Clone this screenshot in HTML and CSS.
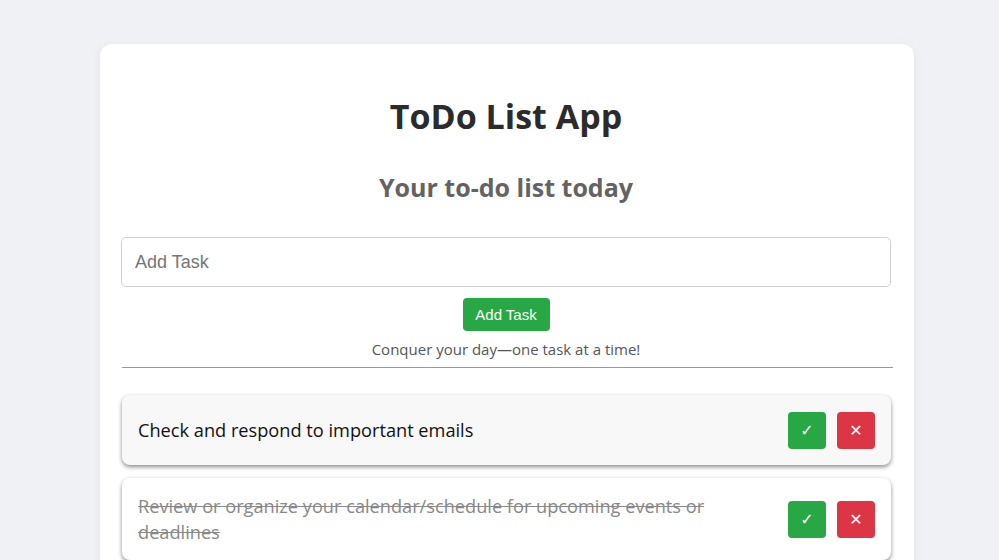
FILE: index.html
```html
<!DOCTYPE html>
<html>
<head>
<meta charset="utf-8">
<link rel="stylesheet" href="styles.css">
</head>
<body>
<main class="card">
  <h1 class="title">ToDo List App</h1>
  <h2 class="subtitle">Your to-do list today</h2>
  <form class="add-form" onsubmit="return false">
    <input class="task-input" type="text" placeholder="Add Task">
    <button class="add-btn" type="submit">Add Task</button>
  </form>
  <p class="tagline">Conquer your day—one task at a time!</p>
  <hr class="divider">
  <ul class="tasks">
    <li class="task">
      <span class="task-text">Check and respond to important emails</span>
      <div class="actions">
        <button class="act done">✓</button>
        <button class="act del">✕</button>
      </div>
    </li>
    <li class="task completed">
      <span class="task-text">Review or organize your calendar/schedule for upcoming events or deadlines</span>
      <div class="actions">
        <button class="act done">✓</button>
        <button class="act del">✕</button>
      </div>
    </li>
  </ul>
</main>
</body>
</html>
```
FILE: styles.css
```css
* { box-sizing: border-box; }
html, body { margin: 0; height: 100%; overflow: hidden; }
body {
  background: #f0f1f5;
  font-family: "Open Sans", "Noto Sans", sans-serif;
  padding: 44px 85px 0 100px;
}
.card {
  background: #fff;
  border-radius: 12px;
  box-shadow: 0 2px 10px rgba(0,0,0,0.06);
  padding: 48px 23px 40px 21px;
  min-height: 600px;
}
.title {
  margin: 0;
  text-align: center;
  font-size: 34px;
  font-weight: 700;
  color: #2b2b2b;
  line-height: 48px;
}
.subtitle {
  margin: 30px 0 0;
  text-align: center;
  font-size: 25px;
  font-weight: 700;
  color: #636363;
  line-height: 34px;
}
.add-form {
  margin-top: 33px;
  display: flex;
  flex-direction: column;
  align-items: center;
}
.task-input {
  width: 100%;
  height: 50px;
  border: 1px solid #cfcfcf;
  border-radius: 5px;
  padding: 0 13px;
  font-family: "Liberation Sans", Arial, sans-serif;
  font-size: 18px;
  color: #333;
  outline: none;
}
.task-input::placeholder { color: #757575; }
.add-btn {
  margin-top: 11px;
  width: 87px;
  height: 33px;
  background: #28a745;
  color: #fff;
  border: none;
  border-radius: 4px;
  font-family: "Liberation Sans", Arial, sans-serif;
  font-size: 15px;
  padding: 0;
}
.tagline {
  margin: 8px 0 0;
  text-align: center;
  font-size: 15px;
  color: #555;
  line-height: 20px;
}
.divider {
  margin: 8px -2px 0 1px;
  border: none;
  border-top: 1px solid #999;
}
.tasks {
  list-style: none;
  margin: 27px 0 0 1px;
  padding: 0;
  display: flex;
  flex-direction: column;
  gap: 13px;
}
.task {
  background: #f8f8f8;
  border-radius: 8px;
  box-shadow: 0 2px 4px rgba(0,0,0,0.45);
  min-height: 70px;
  padding: 15px 16px;
  display: flex;
  align-items: center;
  justify-content: space-between;
  gap: 40px;
}
.task.completed { background: #fff; }
.task-text {
  font-size: 18.2px;
  line-height: 26px;
  color: #111;
}
.completed .task-text {
  color: #888;
  text-decoration: line-through;
}
.actions { display: flex; gap: 11px; flex-shrink: 0; }
.act {
  width: 38px;
  height: 37px;
  border: none;
  border-radius: 4px;
  color: #fff;
  font-size: 16px;
  font-weight: 700;
  padding: 0;
  font-family: "DejaVu Sans", sans-serif;
}
.done { background: #28a745; }
.del { background: #dc3545; }
```
